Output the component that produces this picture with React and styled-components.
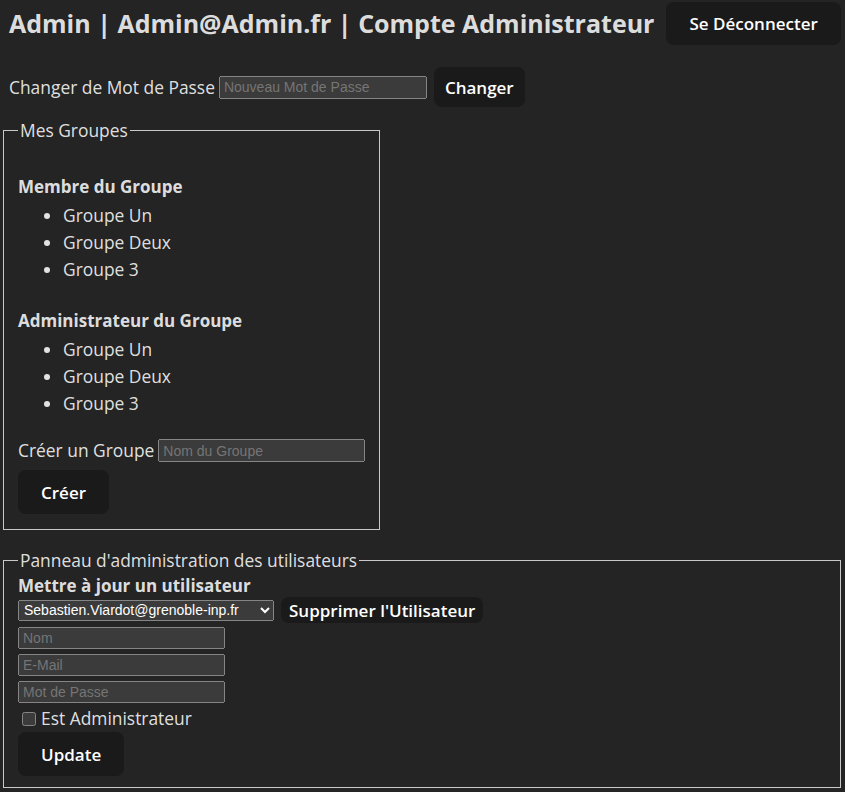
import React from 'react';
import styled, { createGlobalStyle } from 'styled-components';

const GlobalStyle = createGlobalStyle`
  html, body {
    margin: 0;
    padding: 0;
    background: #242424;
    color-scheme: dark;
  }
  body {
    color: rgba(255, 255, 255, 0.87);
    font-family: "Open Sans", "Noto Sans", sans-serif;
    font-size: 17.4px;
    line-height: 27px;
  }
`;

const Page = styled.div`
  padding: 2px 4px 0 3px;
  display: flex;
  flex-direction: column;
`;

const Header = styled.header`
  display: flex;
  align-items: center;
  gap: 12px;
  padding-left: 6px;
`;

const Title = styled.h1`
  margin: 0;
  font-size: 25px;
  font-weight: 700;
  line-height: 43px;
  white-space: nowrap;
`;

const Button = styled.button`
  background: #1a1a1a;
  color: #fff;
  border: 1px solid transparent;
  border-radius: 8px;
  font-family: inherit;
  font-size: 17px;
  font-weight: 600;
  height: ${(p) => p.$h || 44}px;
  padding: 0 ${(p) => p.$px || 22}px;
  margin-left: ${(p) => p.$ml || 0}px;
  cursor: pointer;
  white-space: nowrap;
`;

const Row = styled.div`
  display: flex;
  align-items: center;
  gap: ${(p) => p.$gap || 4}px;
  margin-top: ${(p) => p.$mt || 0}px;
`;

const PasswordRow = styled(Row)`
  padding-left: 6px;
`;

const Label = styled.span`
  white-space: nowrap;
  flex-shrink: 0;
`;

const TextInput = styled.input`
  width: ${(p) => p.$w || 207}px;
  height: ${(p) => p.$h || 22}px;
  min-width: 0;
  box-sizing: border-box;
  font-family: "Liberation Sans", Arial, sans-serif;
  font-size: 14px;
  padding: 1px 3px;
  margin: 0;
`;

const Fieldset = styled.fieldset`
  margin: ${(p) => p.$mt || 0}px 0 0 0;
  width: ${(p) => p.$w}px;
  box-sizing: border-box;
  border: 1px solid #c8c8c8;
  padding: 0 14px ${(p) => p.$pb || 12}px 14px;
`;

const Legend = styled.legend`
  padding: 0 2px;
  margin-left: 0;
  line-height: 22px;
`;

const SectionTitle = styled.h4`
  margin: ${(p) => p.$mt || 0}px 0 0 0;
  font-size: 17px;
  font-weight: 700;
  line-height: 27px;
`;

const List = styled.ul`
  margin: 2px 0 0 0;
  padding-left: 45px;
  list-style: disc;
`;

const Stack = styled.div`
  display: flex;
  flex-direction: column;
  align-items: flex-start;
  gap: 5px;
  margin-top: 4px;
`;

const Select = styled.select`
  width: 256px;
  height: 21px;
  font-family: "Liberation Sans", Arial, sans-serif;
  font-size: 14px;
  padding: 0 1px;
  margin: 0;
`;

const CheckLabel = styled.label`
  display: flex;
  align-items: center;
  gap: 2px;
  line-height: 27px;
  margin-top: -3px;
  input {
    margin: 0 3px 0 4px;
    width: 14px;
    height: 14px;
  }
`;

const groups = ['Groupe Un', 'Groupe Deux', 'Groupe 3'];

export default function App() {
  return (
    <>
      <GlobalStyle />
      <Page>
        <Header>
          <Title>Admin | Admin@Admin.fr | Compte Administrateur</Title>
          <Button $h={43} $px={22}>Se Déconnecter</Button>
        </Header>

        <PasswordRow $mt={22} $gap={4}>
          <Label>Changer de Mot de Passe</Label>
          <TextInput type="password" placeholder="Nouveau Mot de Passe" $w={208} $h={23} />
          <Button $h={40} $px={10} $ml={3}>Changer</Button>
        </PasswordRow>

        <Fieldset $w={377} $mt={12} $pb={15}>
          <Legend>Mes Groupes</Legend>
          <SectionTitle $mt={32}>Membre du Groupe</SectionTitle>
          <List>
            {groups.map((g) => <li key={g}>{g}</li>)}
          </List>
          <SectionTitle $mt={24}>Administrateur du Groupe</SectionTitle>
          <List>
            {groups.map((g) => <li key={g}>{g}</li>)}
          </List>
          <Row $mt={20} $gap={4}>
            <Label>Créer un Groupe</Label>
            <TextInput placeholder="Nom du Groupe" $w={207} $h={23} />
          </Row>
          <Row $mt={6}>
            <Button $h={44} $px={22}>Créer</Button>
          </Row>
        </Fieldset>

        <Fieldset $w={838} $mt={19} $pb={11}>
          <Legend>Panneau d'administration des utilisateurs</Legend>
          <SectionTitle $mt={1}>Mettre à jour un utilisateur</SectionTitle>
          <Row $gap={7} $mt={-2}>
            <Select defaultValue="sv">
              <option value="sv">Sebastien.Viardot@grenoble-inp.fr</option>
            </Select>
            <Button $h={26} $px={7}>Supprimer l'Utilisateur</Button>
          </Row>
          <Stack>
            <TextInput placeholder="Nom" />
            <TextInput placeholder="E-Mail" />
            <TextInput type="password" placeholder="Mot de Passe" />
            <CheckLabel>
              <input type="checkbox" />
              Est Administrateur
            </CheckLabel>
          </Stack>
          <Row $mt={0}>
            <Button $h={44} $px={22}>Update</Button>
          </Row>
        </Fieldset>
      </Page>
    </>
  );
}
